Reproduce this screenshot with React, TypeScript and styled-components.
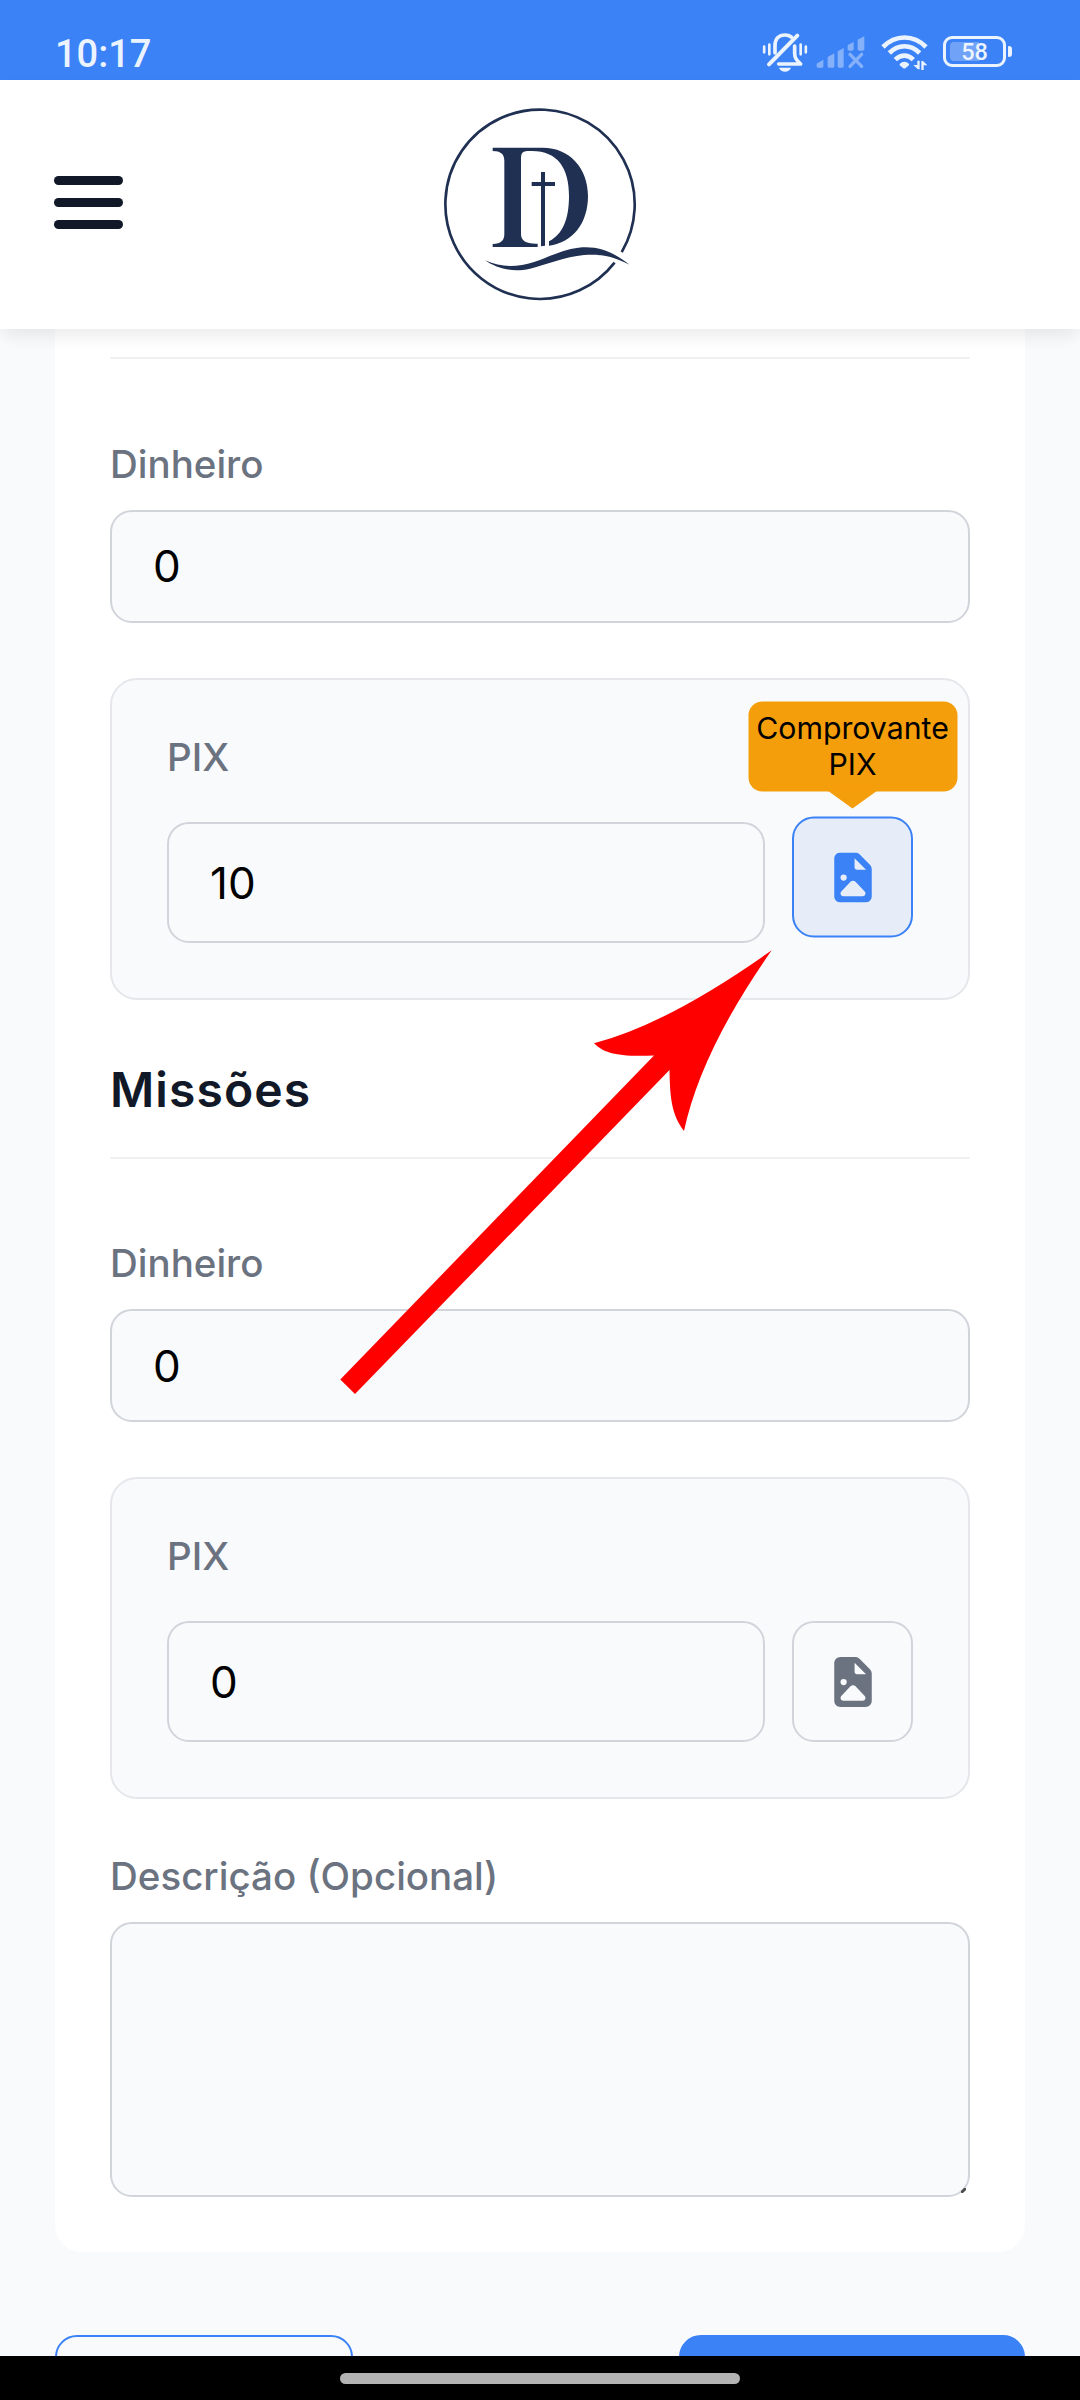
import React from "react";
import styled, { createGlobalStyle, css } from "styled-components";

const color = {
  blue: "#3b82f6",
  page: "#f9fafc",
  ink: "#111827",
  muted: "#6b7280",
  border: "#d1d5db",
  borderSoft: "#e5e7eb",
  rule: "#f0f0f0",
  status: "#ebf3fe",
  amber: "#f59e0b",
  navy: "#203052",
};

const GlobalStyle = createGlobalStyle`
  *, *::before, *::after { box-sizing: border-box; }
  body {
    margin: 0;
    background: ${color.page};
    font-family: Inter, "Liberation Sans", sans-serif;
  }
`;

const Screen = styled.div`
  position: relative;
  display: flex;
  flex-direction: column;
  width: 1080px;
  height: 2400px;
  overflow: hidden;
  background: ${color.page};
`;

const StatusBar = styled.div`
  display: flex;
  flex: none;
  align-items: flex-start;
  justify-content: space-between;
  height: 80px;
  padding: 32px 67px 0 55px;
  background: ${color.blue};
  color: ${color.status};
  font-family: Roboto, "Liberation Sans", sans-serif;
`;

const Clock = styled.span`
  padding-top: 1px;
  font-size: 38px;
  font-weight: 500;
  line-height: 42px;
`;

const StatusIcons = styled.div`
  display: flex;
  align-items: flex-start;

  svg {
    display: block;
  }
`;

const Battery = styled.div`
  position: relative;
  display: flex;
  align-items: center;
  justify-content: center;
  width: 63px;
  height: 31px;
  margin: 4px 7px 0 14px;
  border: 3px solid ${color.status};
  border-radius: 9px;
  font-size: 23.5px;
  font-weight: 500;
  line-height: 25px;

  &::before {
    content: "";
    position: absolute;
    left: 4px;
    top: 3px;
    width: 29px;
    height: 19px;
    border-radius: 4px 0 0 4px;
    background: rgba(255, 255, 255, 0.27);
  }

  &::after {
    content: "";
    position: absolute;
    right: -9px;
    top: 7px;
    width: 4px;
    height: 11px;
    border-radius: 1px 3px 3px 1px;
    background: ${color.status};
  }
`;

const BatteryLevel = styled.span`
  position: relative;
  padding-top: 2px;
`;

const Header = styled.header`
  position: relative;
  z-index: 2;
  display: grid;
  flex: none;
  grid-template-columns: 1fr 220px 1fr;
  align-items: center;
  height: 249px;
  padding: 0 54px;
  background: #fff;
  box-shadow: 0 11px 16px -3px rgba(0, 0, 0, 0.05), 0 6px 20px -2px rgba(0, 0, 0, 0.035);
`;

const MenuButton = styled.button`
  display: flex;
  flex-direction: column;
  gap: 13px;
  width: 69px;
  margin-top: -4px;
  padding: 0;
  border: 0;
  background: none;
`;

const MenuBar = styled.span`
  height: 9px;
  border-radius: 4.5px;
  background: ${color.ink};
`;

const Main = styled.main`
  display: flex;
  flex: 1;
  flex-direction: column;
  min-height: 0;
  overflow: hidden;
  padding: 0 55px;
`;

const Card = styled.section`
  display: flex;
  flex: none;
  flex-direction: column;
  padding: 28px 55px 55px;
  border-radius: 0 0 27px 27px;
  background: #fff;
`;

const Rule = styled.hr`
  width: 100%;
  height: 2px;
  margin: 0;
  border: 0;
  background: ${color.rule};
`;

const SectionTitle = styled.h2`
  margin: 60px 0 37px;
  color: ${color.ink};
  font-size: 48px;
  font-weight: 600;
  line-height: 60px;
  letter-spacing: 1.1px;
`;

const Field = styled.div<{ $top: number }>`
  display: flex;
  flex-direction: column;
  gap: 23px;
  margin-top: ${(p) => p.$top}px;
`;

const Label = styled.label`
  color: ${color.muted};
  font-size: 38.5px;
  font-weight: 500;
  line-height: 46px;
`;

const control = css`
  border: 2px solid ${color.border};
  border-radius: 22px;
  background: ${color.page};
  color: #000;
  font-family: inherit;
  font-size: 44px;
  outline: none;
`;

const Input = styled.input<{ $height: number; $lift?: number }>`
  ${control}
  flex: 1;
  min-width: 0;
  min-height: ${(p) => p.$height}px;
  max-height: ${(p) => p.$height}px;
  padding: 0 41px ${(p) => p.$lift ?? 0}px;
`;

const TextAreaFrame = styled.div`
  position: relative;
  display: flex;
`;

const TextArea = styled.textarea`
  ${control}
  width: 100%;
  height: 275px;
  resize: none;
`;

const Grip = styled.svg`
  position: absolute;
  right: 4px;
  bottom: 4px;
`;

const PixPanel = styled.div`
  display: flex;
  flex-direction: column;
  gap: 42px;
  margin-top: 55px;
  padding: 54px 55px 55px;
  border: 2px solid ${color.borderSoft};
  border-radius: 27px;
  background: ${color.page};
`;

const PixRow = styled.div`
  display: flex;
  gap: 27px;
`;

const UploadSlot = styled.div<{ $raised: boolean }>`
  position: relative;
  flex: none;
  width: 121px;
  height: 121px;
  transform: translateY(${(p) => (p.$raised ? -5.5 : 0)}px);
`;

const UploadButton = styled.button<{ $active: boolean }>`
  display: flex;
  align-items: center;
  justify-content: center;
  width: 100%;
  height: 100%;
  padding: 0;
  border: 2px solid ${(p) => (p.$active ? color.blue : color.border)};
  border-radius: 22px;
  background: ${(p) => (p.$active ? "#e6edf9" : color.page)};
  color: ${(p) => (p.$active ? color.blue : color.muted)};
`;

const Tooltip = styled.div`
  position: absolute;
  left: 50%;
  bottom: calc(100% + 25.5px);
  display: flex;
  align-items: center;
  width: 209px;
  height: 89.5px;
  padding-bottom: 2px;
  border-radius: 14px;
  background: ${color.amber};
  color: #000;
  font-size: 30.25px;
  line-height: 36px;
  text-align: center;
  transform: translateX(-50%);

  &::after {
    content: "";
    position: absolute;
    left: 50%;
    top: 100%;
    margin: -1px 0 0 -25px;
    border: 25px solid transparent;
    border-top: 18px solid ${color.amber};
    border-bottom: 0;
  }
`;

const TooltipText = styled.span`
  width: 100%;
`;

const Actions = styled.div`
  display: flex;
  flex: none;
  justify-content: space-between;
  margin-top: 83px;
`;

const ActionButton = styled.button<{ $primary?: boolean }>`
  width: ${(p) => (p.$primary ? 346 : 298)}px;
  height: 121px;
  border: 2px solid ${color.blue};
  border-radius: 22px;
  background: ${(p) => (p.$primary ? color.blue : "transparent")};
`;

const NavBar = styled.div`
  display: flex;
  flex: none;
  justify-content: center;
  height: 44px;
  padding-top: 17px;
  background: #000;
`;

const NavHandle = styled.div`
  width: 400px;
  height: 11px;
  border-radius: 5.5px;
  background: #b3b3b3;
`;

const PointerOverlay = styled.svg`
  position: absolute;
  left: 0;
  top: 0;
  z-index: 3;
  pointer-events: none;
`;

const SignalIcon = styled.svg`
  margin-left: 8px;
`;

const WifiIcon = styled.svg`
  margin-left: 15px;
`;

const MutedBell = () => (
  <svg width="46" height="40" viewBox="66 97 138 120" fill="none" stroke={color.status} strokeLinecap="round">
    <path d="M72.500 141v17M88 135v29M182 135v29M197.500 141v17" strokeWidth="8" />
    <path d="M105 160v-22c0-20 11-32 30-32 8 0 14 2 19 6M164 139v22c0 14 5 20 18 32H116" strokeWidth="11" strokeLinejoin="round" />
    <path d="M172 108 87 194" strokeWidth="12" />
    <path d="M117 204h36c-3 8-10 12-18 12s-15-4-18-12z" fill={color.status} stroke="none" />
  </svg>
);

const NoSignal = () => (
  <SignalIcon width="50" height="40" viewBox="230 97 150 120" fill="#85b1fa">
    <path d="M232 192l20-12v20a4 4 0 0 1-4 4H236a4 4 0 0 1-4-4z" />
    <path d="M265 172l20-11v39a4 4 0 0 1-4 4h-12a4 4 0 0 1-4-4z" />
    <path d="M295 155l18-10v55a4 4 0 0 1-4 4h-10a4 4 0 0 1-4-4z" />
    <path d="M325 136l18-9v22l-4 4h-10l-4-4z" />
    <path d="M355 120l20-10v39l-4 4h-12l-4-4z" />
    <path d="M332 164l35 36M367 164l-35 36" stroke="#85b1fa" strokeWidth="10" strokeLinecap="round" />
  </SignalIcon>
);

const Wifi = () => (
  <WifiIcon width="48" height="40" viewBox="424 97 144 120" fill="none" stroke={color.status} strokeWidth="14">
    <path d="M430 142c37-38 92-38 129 0" />
    <path d="M449 160c27-27 64-27 91 0" />
    <path d="M467 180c16-16 38-16 54 0" />
    <path d="M480 193c9-9 19-9 28 0v4l-10 8q-4 3-8 0l-10-8z" fill={color.status} stroke="none" />
    <path d="M540 183v26h-5l-14-13h12v-13zM545 211v-27h5l13 13h-11v14z" fill={color.status} stroke="none" />
  </WifiIcon>
);

const Logo = () => (
  <svg width="220" height="230" viewBox="0 0 660 690" fill={color.navy}>
    <path d="M575.200 486.300A284 284 0 1 0 553.800 517.800" fill="none" stroke={color.navy} strokeWidth="8" />
    <path d="M188 173H338C420 173 474 236 474 318C474 400 428 458 357 467V454C398 433 417 388 417 318C417 235 383 183 306 183H292Q273 183 273 202V432C273 452 287 462 323 461V471H188V462C213 461 223 452 223 432V212C223 193 213 183 188 183Z" />
    <path d="M333 246H345V276H375V288H345V467L333 469V288H305V276H333Z" />
    <path d="M165 511C215 533 260 532 312 516C355 502 395 479 445 473C505 466 550 486 598 524C550 498 510 491 462 495C405 500 350 524 300 536C245 548 200 535 165 511Z" />
  </svg>
);

const FileImage = () => (
  <svg width="38" height="50" viewBox="0 0 384 512" fill="currentColor">
    <path
      fillRule="evenodd"
      d="M0 64C0 28.700 28.700 0 64 0H213.500c17 0 33.300 6.700 45.300 18.700L365.300 125.300c12 12 18.700 28.200 18.700 45.200V448c0 35.300-28.700 64-64 64H64c-35.300 0-64-28.700-64-64V64zM208 58.500V152c0 13.300 10.700 24 24 24h93.500L208 58.500zM128 256a32 32 0 1 0-64 0 32 32 0 1 0 64 0zM92.600 448H291.400c15.800 0 28.600-12.800 28.600-28.600 0-7.300-2.800-14.400-7.900-19.700L215.300 297.900c-6-6.300-14.400-9.900-23.200-9.900s-17.200 3.600-23.200 9.900L71.900 399.700c-5 5.300-7.900 12.300-7.900 19.700 0 15.800 12.800 28.600 28.600 28.600z"
    />
  </svg>
);

const MoneyField = ({ id, value, top, lift }: { id: string; value: string; top: number; lift?: number }) => (
  <Field $top={top}>
    <Label htmlFor={id}>Dinheiro</Label>
    <Input id={id} $height={113} $lift={lift} defaultValue={value} />
  </Field>
);

const PixField = ({ id, value, attached = false }: { id: string; value: string; attached?: boolean }) => (
  <PixPanel>
    <Label htmlFor={id}>PIX</Label>
    <PixRow>
      <Input id={id} $height={121} defaultValue={value} />
      <UploadSlot $raised={attached}>
        <UploadButton type="button" $active={attached}>
          <FileImage />
        </UploadButton>
        {attached && (
          <Tooltip>
            <TooltipText>Comprovante PIX</TooltipText>
          </Tooltip>
        )}
      </UploadSlot>
    </PixRow>
  </PixPanel>
);

export default function App() {
  return (
    <Screen>
      <GlobalStyle />
      <StatusBar>
        <Clock>10:17</Clock>
        <StatusIcons>
          <MutedBell />
          <NoSignal />
          <Wifi />
          <Battery>
            <BatteryLevel>58</BatteryLevel>
          </Battery>
        </StatusIcons>
      </StatusBar>

      <Header>
        <MenuButton type="button">
          <MenuBar />
          <MenuBar />
          <MenuBar />
        </MenuButton>
        <Logo />
      </Header>

      <Main>
        <Card>
          <Rule />
          <MoneyField id="offering-cash" value="0" top={82} lift={2} />
          <PixField id="offering-pix" value="10" attached />

          <SectionTitle>Missões</SectionTitle>
          <Rule />
          <MoneyField id="missions-cash" value="0" top={81} />
          <PixField id="missions-pix" value="0" />

          <Field $top={54}>
            <Label htmlFor="description">Descrição (Opcional)</Label>
            <TextAreaFrame>
              <TextArea id="description" />
              <Grip width="5" height="5" viewBox="0 0 5 5">
                <path d="M1.200 3.800 3.800 1.200" stroke="#4b4b4b" strokeWidth="2.800" strokeLinecap="round" />
              </Grip>
            </TextAreaFrame>
          </Field>
        </Card>

        <Actions>
          <ActionButton type="button" />
          <ActionButton type="button" $primary />
        </Actions>
      </Main>

      <NavBar>
        <NavHandle />
      </NavBar>

      <PointerOverlay width="1080" height="2400" viewBox="0 0 1080 2400" fill="#f00">
        <path d="M771.700 950.300Q668 1024 594 1043.300C604 1053 616 1057 654 1055.600L340.300 1379.500 355 1394 669.500 1070C670 1100 672 1115 684 1131Q701 1051 771.700 950.300Z" />
      </PointerOverlay>
    </Screen>
  );
}
